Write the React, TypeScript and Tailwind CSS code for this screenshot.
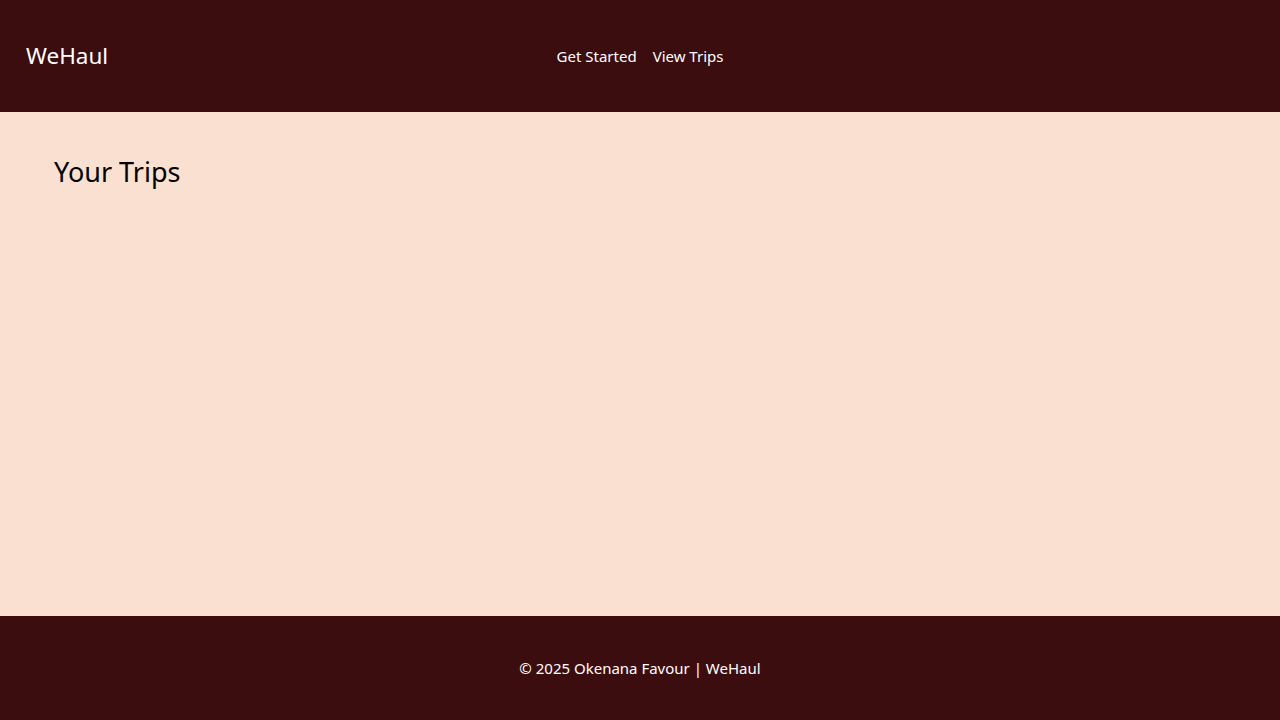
import React from 'react';

const font = { fontFamily: '"Noto Sans", "Open Sans", sans-serif' };

const App: React.FC = () => {
  return (
    <div className="min-h-screen flex flex-col bg-[#fae0d0]" style={font}>
      <header className="h-[112px] bg-[#3c0d0e] text-white grid grid-cols-[1fr_auto_1fr] items-center px-[26px]">
        <div className="text-[22.5px] leading-none">WeHaul</div>
        <nav className="flex items-center gap-4 text-[15px]">
          <a href="#" className="hover:underline">Get Started</a>
          <a href="#" className="hover:underline">View Trips</a>
        </nav>
        <div />
      </header>

      <main className="h-[504px] px-[54px]">
        <h2 className="mt-[40px] text-[27px] text-black leading-[40px]">Your Trips</h2>
      </main>

      <footer className="h-[104px] bg-[#3c0d0e] text-white flex items-center justify-center text-[15px]">
        © 2025 Okenana Favour | WeHaul
      </footer>
    </div>
  );
};

export default App;
